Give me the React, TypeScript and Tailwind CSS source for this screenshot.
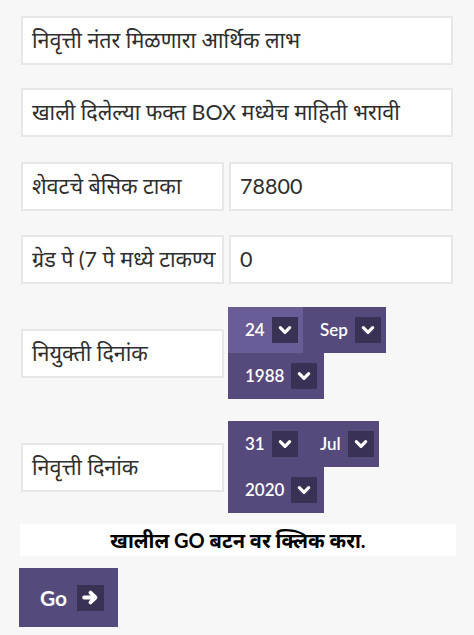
import React from "react";

const font = { fontFamily: '"Lato", "Noto Sans Devanagari", "Noto Sans", sans-serif' };

const Chevron = () => (
  <span className="flex h-[26px] w-[26px] items-center justify-center bg-[#3b3154]">
    <svg width="14" height="14" viewBox="0 0 24 24" fill="none">
      <path d="M4 8l8 8 8-8" stroke="white" strokeWidth="5.5" strokeLinecap="round" strokeLinejoin="round" />
    </svg>
  </span>
);

const Seg = ({ value, active, w }: { value: string; active?: boolean; w: string }) => (
  <div
    className={`flex h-[46px] items-center gap-[7px] pl-[17px] text-[17px] font-semibold text-white ${w} ${
      active ? "bg-[#6a5c97]" : "bg-[#564a7c]"
    }`}
  >
    <span>{value}</span>
    <Chevron />
  </div>
);

const Box = ({ children, className = "" }: { children: React.ReactNode; className?: string }) => (
  <div
    className={`flex h-[49px] items-center border-2 border-[#e7e7e7] bg-white pl-[9px] text-[21.5px] text-[#2e2e2e] ${className}`}
  >
    {children}
  </div>
);

const DateRow = ({
  label,
  day,
  month,
  year,
  activeDay,
  monthW,
}: {
  label: string;
  day: string;
  month: string;
  year: string;
  activeDay?: boolean;
  monthW: string;
}) => (
  <div className="flex items-center gap-[4px]">
    <Box className="w-[203px]">{label}</Box>
    <div className="flex flex-col">
      <div className="flex">
        <Seg value={day} active={activeDay} w="w-[75px]" />
        <Seg value={month} w={monthW} />
      </div>
      <Seg value={year} w="w-[96px]" />
    </div>
  </div>
);

export default function App() {
  return (
    <div className="min-h-[635px] bg-[#f7f7f7] px-[21px] pt-[16px]" style={font}>
      <Box className="w-[432px]">निवृत्ती नंतर मिळणारा आर्थिक लाभ</Box>
      <Box className="mt-[23px] w-[432px]">खाली दिलेल्या फक्त BOX मध्येच माहिती भरावी</Box>

      <div className="mt-[25px] flex gap-[5px]">
        <Box className="w-[203px]">शेवटचे बेसिक टाका</Box>
        <Box className="w-[224px]">78800</Box>
      </div>
      <div className="mt-[24px] flex gap-[5px]">
        <Box className="w-[203px]">
          <span className="block w-[184px] overflow-hidden whitespace-nowrap">ग्रेड पे (7 पे मध्ये टाकण्यासाठी)</span>
        </Box>
        <Box className="w-[224px]">0</Box>
      </div>

      <div className="mt-[23px]">
        <DateRow label="नियुक्ती दिनांक" day="24" month="Sep" year="1988" activeDay monthW="w-[83px] pl-[16px]" />
      </div>
      <div className="mt-[22px]">
        <DateRow label="निवृत्ती दिनांक" day="31" month="Jul" year="2020" monthW="w-[76px]" />
      </div>

      <div className="mt-[11px] -ml-px flex h-[32px] w-[436px] items-center justify-center bg-white text-[20px] font-bold text-black">
        खालील GO बटन वर क्लिक करा.
      </div>

      <button className="mt-[12px] -ml-[2px] flex h-[59px] w-[99px] items-center gap-[10px] bg-[#554a7c] pl-[21px] text-[21px] font-bold text-white">
        <span>Go</span>
        <span className="flex h-[26px] w-[27px] items-center justify-center bg-[#3b3154]">
          <svg width="17" height="17" viewBox="0 0 24 24" fill="none">
            <path d="M3 12h14M12 5l7 7-7 7" stroke="white" strokeWidth="5.5" strokeLinecap="round" strokeLinejoin="round" />
          </svg>
        </span>
      </button>
    </div>
  );
}
